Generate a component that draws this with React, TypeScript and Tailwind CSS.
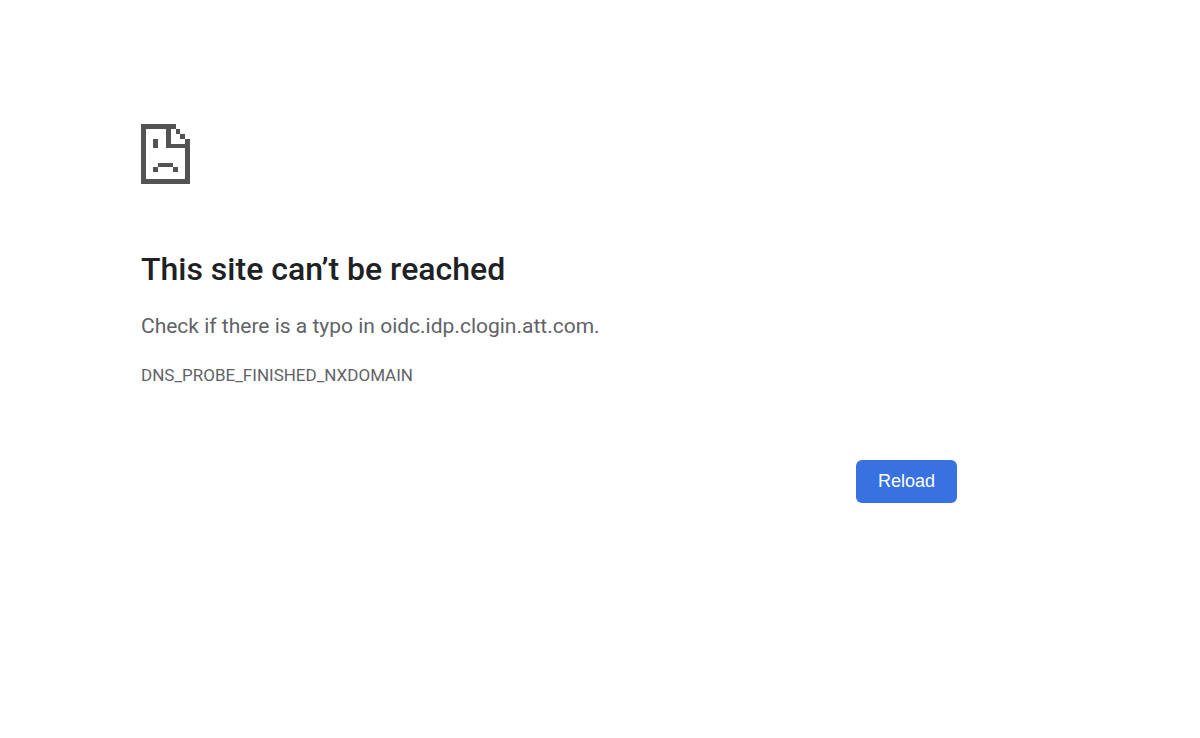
export default function App() {
  return (
    <main className="min-h-screen bg-white px-6 pt-31 font-[Roboto,sans-serif] text-[#5f6368] md:pl-[141px]">
      <div className="w-full max-w-[816px]">
        <svg
          viewBox="0 0 49 60"
          className="h-15 w-[49px]"
          fill="#535353"
          shapeRendering="crispEdges"
          aria-hidden="true"
        >
          <path d="M0 0H35V5H5V55H44V24H25V5H30V20H44V15H49V60H0Z" />
          <path d="M35 5H39V10H35ZM39 10H44V15H39Z" />
          <path d="M12 15H17V24H12Z" />
          <path d="M17 39H32V43H17ZM12 43H17V48H12ZM32 43H37V48H32Z" />
        </svg>

        <h1 className="mt-16 text-[32px] leading-[42px] font-medium text-[#202124]">
          This site can’t be reached
        </h1>
        <p className="mt-[22px] text-[21px] leading-7">
          Check if there is a typo in oidc.idp.clogin.att.com.
        </p>
        <p className="mt-[22px] text-[17px] leading-[26px]">DNS_PROBE_FINISHED_NXDOMAIN</p>

        <div className="mt-18 flex justify-end">
          <button
            type="button"
            className="rounded-md bg-[#3871e0] px-[22px] py-2 font-['Liberation_Sans',sans-serif] text-lg leading-[27px] text-white"
          >
            Reload
          </button>
        </div>
      </div>
    </main>
  );
}
